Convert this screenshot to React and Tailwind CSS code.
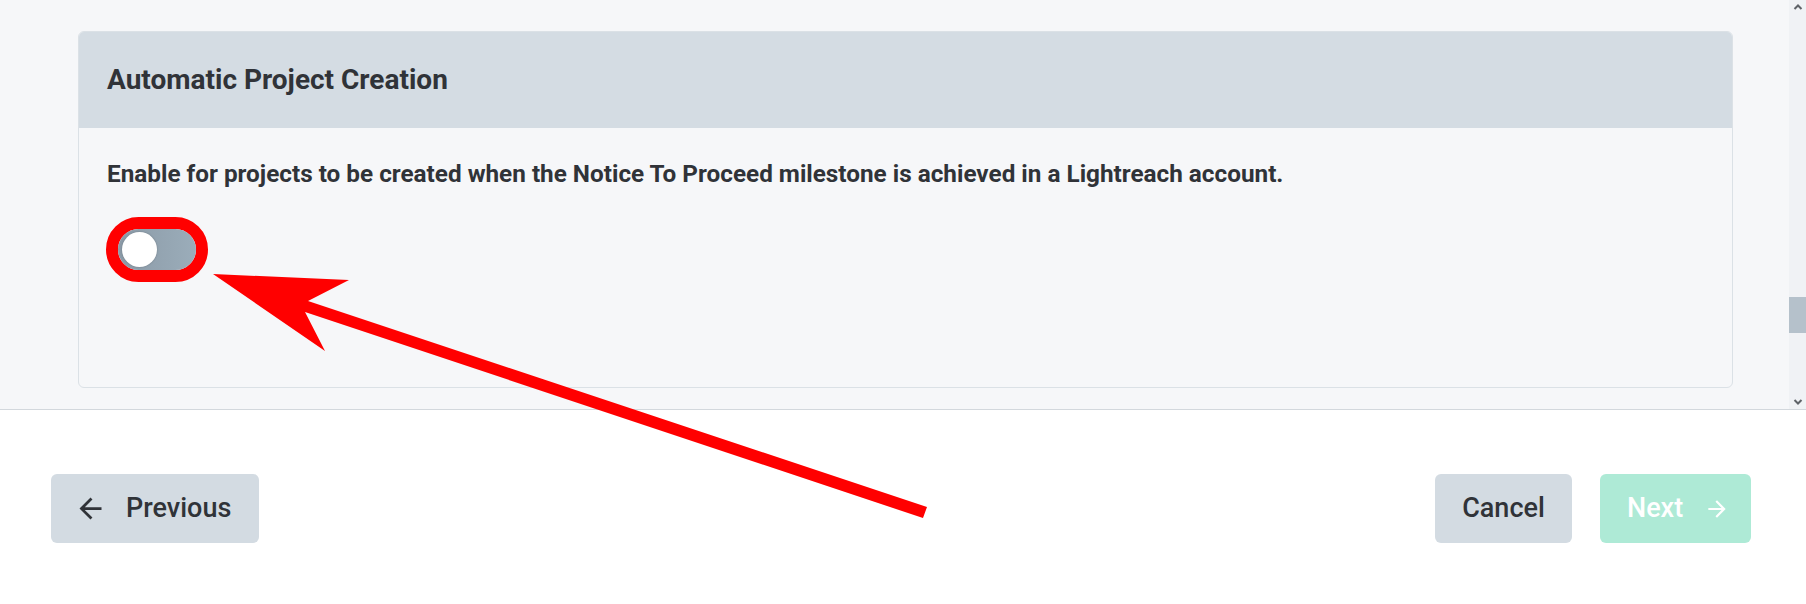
import React from 'react';
import { MdArrowBack, MdArrowForward } from 'react-icons/md';

const Toggle = () => (
  // red annotation ring around the switch
  <span className="inline-flex -ml-px border-[12px] border-[#ff0000] rounded-full">
    <span className="relative w-[78px] h-[41px] rounded-full bg-gradient-to-r from-[#8b9aa7] to-[#9badba]">
      <span className="absolute left-[4px] top-[3px] w-[35px] h-[35px] rounded-full bg-white shadow-[0_0_2px_rgba(0,0,0,0.25)]" />
    </span>
  </span>
);

const Scrollbar = () => (
  <div className="w-[17px] bg-[#f0f2f5] flex flex-col items-center">
    <svg width="10" height="8" viewBox="0 0 10 8" className="mt-[3px]">
      <path d="M1.5 6 L5 2.5 L8.5 6" fill="none" stroke="#5f6368" strokeWidth="2" />
    </svg>
    <div className="mt-[286px] w-full h-[36px] bg-[#b5c1cb]" />
    <div className="flex-1" />
    <svg width="10" height="8" viewBox="0 0 10 8" className="mb-[3px]">
      <path d="M1.5 2 L5 5.5 L8.5 2" fill="none" stroke="#5f6368" strokeWidth="2" />
    </svg>
  </div>
);

const App = () => {
  return (
    <div className="relative w-[1806px] h-[604px] bg-white font-['Roboto',sans-serif] text-[#303338] flex flex-col overflow-hidden">
      <div className="h-[410px] flex bg-[#f6f7f9] border-b border-[#d3d8dd]">
        <div className="flex-1 pl-[78px] pr-[56px] pt-[31px]">
          <div className="border border-[#dbe1e6] rounded-[6px] overflow-hidden">
            <div className="h-[96px] bg-[#d4dce3] flex items-center pl-[28px]">
              <h2 className="text-[28px] leading-[34px] font-bold">Automatic Project Creation</h2>
            </div>
            <div className="h-[259px] pl-[28px] pt-[31px]">
              <p className="text-[24.3px] leading-[30px] font-bold">
                Enable for projects to be created when the Notice To Proceed milestone is achieved in a Lightreach account.
              </p>
              <div className="mt-[28px]">
                <Toggle />
              </div>
            </div>
          </div>
        </div>
        <Scrollbar />
      </div>

      <div className="flex justify-between pl-[51px] pr-[55px] pt-[64px]">
        <button className="w-[208px] h-[69px] rounded-[6px] bg-[#d3dbe2] flex items-center pl-[23px] gap-[19px] text-[27px] font-medium">
          <MdArrowBack size={33} />
          Previous
        </button>
        <div className="flex gap-[28px]">
          <button className="w-[137px] h-[69px] rounded-[6px] bg-[#d3dbe2] flex items-center justify-center text-[27px] font-medium">
            Cancel
          </button>
          <button className="w-[151px] h-[69px] rounded-[6px] bg-[#aeead6] text-white flex items-center pl-[27px] gap-[21px] text-[27px] font-medium">
            Next
            <MdArrowForward size={26} />
          </button>
        </div>
      </div>

      {/* annotation arrow */}
      <svg className="absolute inset-0 pointer-events-none" width="1806" height="604" viewBox="0 0 1806 604">
        <polygon
          points="213,274 349,280 308,301 927,507 923,518 305,312 325,351"
          fill="#ff0000"
        />
      </svg>
    </div>
  );
};

export default App;
